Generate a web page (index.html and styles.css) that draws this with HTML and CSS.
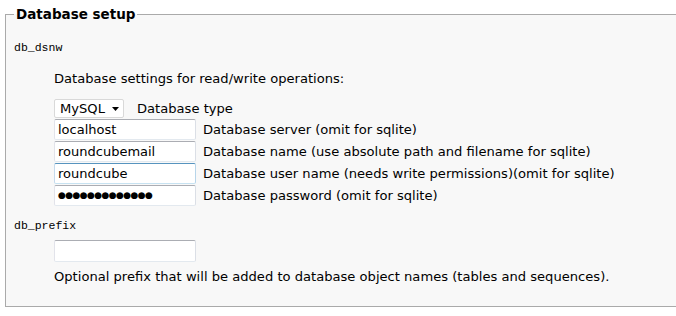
FILE: index.html
```html
<!DOCTYPE html>
<html lang="en">
<head>
    <meta charset="UTF-8">
    <title>Roundcube Webmail Installer</title>
    <link rel="stylesheet" href="styles.css">
</head>
<body>
    <fieldset class="setup">
        <legend>Database setup</legend>
        <dl class="config">
            <dt class="propname">db_dsnw</dt>
            <dd>
                <p class="hint">Database settings for read/write operations:</p>
                <div class="fields">
                    <div class="row row-type">
                        <div class="select">
                            <span>MySQL</span>
                            <svg width="7" height="4" viewBox="0 0 7 4"><path d="M0 0h7L3.5 4z" fill="#000"/></svg>
                        </div>
                        <label>Database type</label>
                    </div>
                    <div class="row">
                        <input type="text" value="localhost">
                        <label>Database server (omit for sqlite)</label>
                    </div>
                    <div class="row">
                        <input type="text" value="roundcubemail">
                        <label>Database name (use absolute path and filename for sqlite)</label>
                    </div>
                    <div class="row">
                        <input type="text" class="hover" value="roundcube">
                        <label>Database user name (needs write permissions)(omit for sqlite)</label>
                    </div>
                    <div class="row">
                        <span class="input password">&#9679;&#9679;&#9679;&#9679;&#9679;&#9679;&#9679;&#9679;&#9679;&#9679;&#9679;&#9679;&#9679;</span>
                        <label>Database password (omit for sqlite)</label>
                    </div>
                </div>
            </dd>

            <dt class="propname prefix">db_prefix</dt>
            <dd class="prefix-field">
                <input type="text" class="single" value="">
                <p class="hint after">Optional prefix that will be added to database object names (tables and sequences).</p>
            </dd>
        </dl>
    </fieldset>
</body>
</html>
```

FILE: styles.css
```css
* {
    box-sizing: border-box;
}

html, body {
    margin: 0;
    padding: 0;
    background: #fff;
    overflow: hidden;
}

body {
    font-family: "DejaVu Sans", Verdana, sans-serif;
    font-size: 13.1px;
    line-height: 16px;
    color: #000;
}

.setup {
    margin: 6px -30px 0 5px;
    padding: 0 8px 21px 8px;
    border: 1px solid #aaa;
    background: #f8f8f8;
}

.setup legend {
    padding: 0 2px;
    font-weight: bold;
    font-size: 13.5px;
    line-height: 16px;
}

.config {
    margin: 18px 0 0 0;
}

.config dt {
    margin: 0;
}

.config dd {
    margin: 0 0 0 40px;
}

.propname {
    font-family: "Liberation Mono", "Courier New", monospace;
    font-size: 11.5px;
    line-height: 16px;
}

.propname.prefix {
    margin-top: 12px;
}

.hint {
    margin: 15px 0 12px 0;
}

.prefix-field {
    padding-top: 6px;
}

.hint.after {
    margin: 7px 0 0 0;
}

.fields {
    display: flex;
    flex-direction: column;
    row-gap: 1px;
}

.row {
    display: flex;
    align-items: center;
    gap: 7px;
}

.row-type {
    gap: 13px;
}

.select {
    display: flex;
    align-items: center;
    justify-content: space-between;
    width: 70px;
    height: 19px;
    padding: 0 4px 0 5px;
    background: #fff;
    border: 1px solid #d9d9d9;
    border-radius: 2px;
}

.select svg {
    display: block;
}

input,
.input {
    display: block;
    width: 142px;
    height: 21px;
    margin: 0;
    padding: 0 3px;
    font-family: inherit;
    font-size: 13px;
    line-height: 19px;
    color: #000;
    background: #fff;
    border: 1px solid;
    border-color: #abadb3 #dbdfe6 #e3e9ef #e2e3ea;
    border-radius: 2px;
    outline: none;
}

input.hover {
    border-color: #5794bf #b7d5ea #c7e2f1 #c5daed;
}

.password {
    font-size: 9px;
    letter-spacing: -0.6px;
    white-space: nowrap;
    overflow: hidden;
}

input.single {
    height: 22px;
}
```
